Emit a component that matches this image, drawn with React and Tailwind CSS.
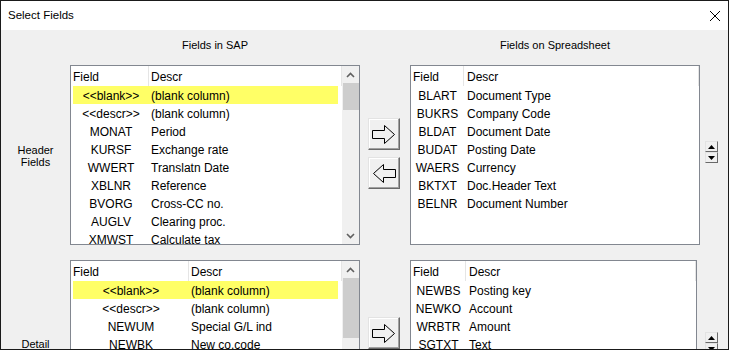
import React from 'react';

const sapHeader = [
  ['<<blank>>', '(blank column)'],
  ['<<descr>>', '(blank column)'],
  ['MONAT', 'Period'],
  ['KURSF', 'Exchange rate'],
  ['WWERT', 'Translatn Date'],
  ['XBLNR', 'Reference'],
  ['BVORG', 'Cross-CC no.'],
  ['AUGLV', 'Clearing proc.'],
  ['XMWST', 'Calculate tax'],
  ['ZTERM', 'Payt terms'],
];

const sheetHeader = [
  ['BLART', 'Document Type'],
  ['BUKRS', 'Company Code'],
  ['BLDAT', 'Document Date'],
  ['BUDAT', 'Posting Date'],
  ['WAERS', 'Currency'],
  ['BKTXT', 'Doc.Header Text'],
  ['BELNR', 'Document Number'],
];

const sapDetail = [
  ['<<blank>>', '(blank column)'],
  ['<<descr>>', '(blank column)'],
  ['NEWUM', 'Special G/L ind'],
  ['NEWBK', 'New co.code'],
  ['MWSKZ', 'Tax code'],
  ['ZUONR', 'Assignment'],
];

const sheetDetail = [
  ['NEWBS', 'Posting key'],
  ['NEWKO', 'Account'],
  ['WRBTR', 'Amount'],
  ['SGTXT', 'Text'],
];

const Chevron = ({ up }) => (
  <svg width="9" height="6" viewBox="0 0 9 6">
    <polyline points={up ? '1,5 4.5,1.5 8,5' : '1,1 4.5,4.5 8,1'} fill="none" stroke="#606060" strokeWidth="1.6" />
  </svg>
);

const Scrollbar = ({ thumbTop, thumbHeight }) => (
  <div className="w-[17px] h-full bg-[#f0f0f0] relative shrink-0">
    <div className="h-[17px] flex items-center justify-center"><Chevron up /></div>
    <div className="absolute left-[1px] right-0 bg-[#cdcdcd]" style={{ top: thumbTop, height: thumbHeight }} />
    <div className="absolute bottom-0 left-0 right-0 h-[17px] flex items-center justify-center"><Chevron /></div>
  </div>
);

const ListBox = ({ rows, colW, width, highlight, scroll, descPad = 'pl-[2px]' }) => (
  <div className="h-full border border-[#828790] bg-white flex overflow-hidden shrink-0" style={{ width }}>
    <div className="flex-1 flex flex-col overflow-hidden">
      <div className="h-[20px] flex items-center shrink-0 border-r border-[#e5e5e5]">
        <div className="h-full flex items-center pl-[2px] pt-[2px] border-r border-[#e5e5e5] shrink-0" style={{ width: colW }}>Field</div>
        <div className={`${descPad} pt-[2px]`}>Descr</div>
      </div>
      {rows.map(([f, d], i) => (
        <div key={f} className={`h-[18px] shrink-0 flex items-center pt-[1px] ${scroll ? 'ml-[2px] mr-[4px]' : ''} ${highlight && i === 0 ? 'bg-[#ffff66]' : ''}`}>
          <div className="text-center shrink-0 whitespace-nowrap" style={{ width: scroll ? colW - 2 : colW }}>{f}</div>
          <div className={`${descPad} whitespace-nowrap`}>{d}</div>
        </div>
      ))}
    </div>
    {scroll && <Scrollbar {...scroll} />}
  </div>
);

const ArrowButton = ({ left }) => (
  <button className="w-[32px] h-[32px] bg-[#f0f0f0] border border-t-[#e3e3e3] border-l-[#e3e3e3] border-r-[#696969] border-b-[#696969] shadow-[inset_-1px_-1px_0_#a0a0a0,inset_1px_1px_0_#ffffff] flex items-center justify-center p-0">
    <svg width="24" height="19" viewBox="0 0 24 19" style={{ transform: left ? 'scaleX(-1)' : undefined }}>
      <polygon points="0.5,5.5 12.5,5.5 12.5,0.5 22.5,9.5 12.5,18.5 12.5,13.5 0.5,13.5" fill="none" stroke="#000" strokeWidth="1" />
    </svg>
  </button>
);

const SpinButton = ({ down }) => (
  <div className="w-[13px] h-[11px] bg-[#f0f0f0] border border-t-[#e3e3e3] border-l-[#e3e3e3] border-r-[#696969] border-b-[#696969] flex items-center justify-center">
    <svg width="7" height="4" viewBox="0 0 7 4">
      <polygon points={down ? '0,0 7,0 3.5,4' : '0,4 7,4 3.5,0'} fill="#000" />
    </svg>
  </div>
);

const Spinner = () => (
  <div className="flex flex-col">
    <SpinButton />
    <SpinButton down />
  </div>
);

export default function App() {
  return (
    <div className="w-[729px] h-[350px] border border-[#1a1a1a] flex flex-col overflow-hidden bg-[#f0f0f0] text-black" style={{ fontFamily: '"Liberation Sans", Arial, sans-serif' }}>
      {/* title bar */}
      <div className="h-[29px] bg-white flex items-center justify-between pl-[7px] pr-[7px] shrink-0">
        <span className="text-[11.5px]">Select Fields</span>
        <svg width="12" height="12" viewBox="0 0 12 12">
          <path d="M1 1 L11 11 M11 1 L1 11" stroke="#000" strokeWidth="1" />
        </svg>
      </div>

      {/* column headings */}
      <div className="h-[35px] flex text-[11px] leading-[14px] pt-[8px] shrink-0">
        <div className="w-[69px]" />
        <div className="w-[290px] text-center">Fields in SAP</div>
        <div className="w-[50px]" />
        <div className="w-[290px] text-center">Fields on Spreadsheet</div>
      </div>

      {/* header fields */}
      <div className="h-[180px] flex shrink-0 text-[12px]">
        <div className="w-[69px] flex items-center justify-center text-center text-[11px] leading-[12px] pt-[2px]">Header<br />Fields</div>
        <ListBox rows={sapHeader} colW={78} width={290} highlight scroll={{ thumbTop: 17, thumbHeight: 27 }} />
        <div className="ml-[8px] pt-[53px] flex flex-col gap-[7px]">
          <ArrowButton />
          <ArrowButton left />
        </div>
        <div className="ml-[10px]">
          <ListBox rows={sheetHeader} colW={53} width={290} descPad="pl-[3px]" />
        </div>
        <div className="ml-[5px] pt-[76px]"><Spinner /></div>
      </div>

      {/* detail fields */}
      <div className="h-[180px] flex shrink-0 mt-[15px] text-[12px]">
        <div className="w-[69px] flex items-center justify-center text-center text-[11px] leading-[12px]">Detail<br />Fields</div>
        <ListBox rows={sapDetail} colW={118} width={290} highlight scroll={{ thumbTop: 17, thumbHeight: 60 }} />
        <div className="ml-[8px] pt-[57px] flex flex-col gap-[7px]">
          <ArrowButton />
          <ArrowButton left />
        </div>
        <div className="ml-[10px]">
          <ListBox rows={sheetDetail} colW={55} width={287} descPad="pl-[3px]" />
        </div>
        <div className="ml-[8px] pt-[72px]"><Spinner /></div>
      </div>
    </div>
  );
}
